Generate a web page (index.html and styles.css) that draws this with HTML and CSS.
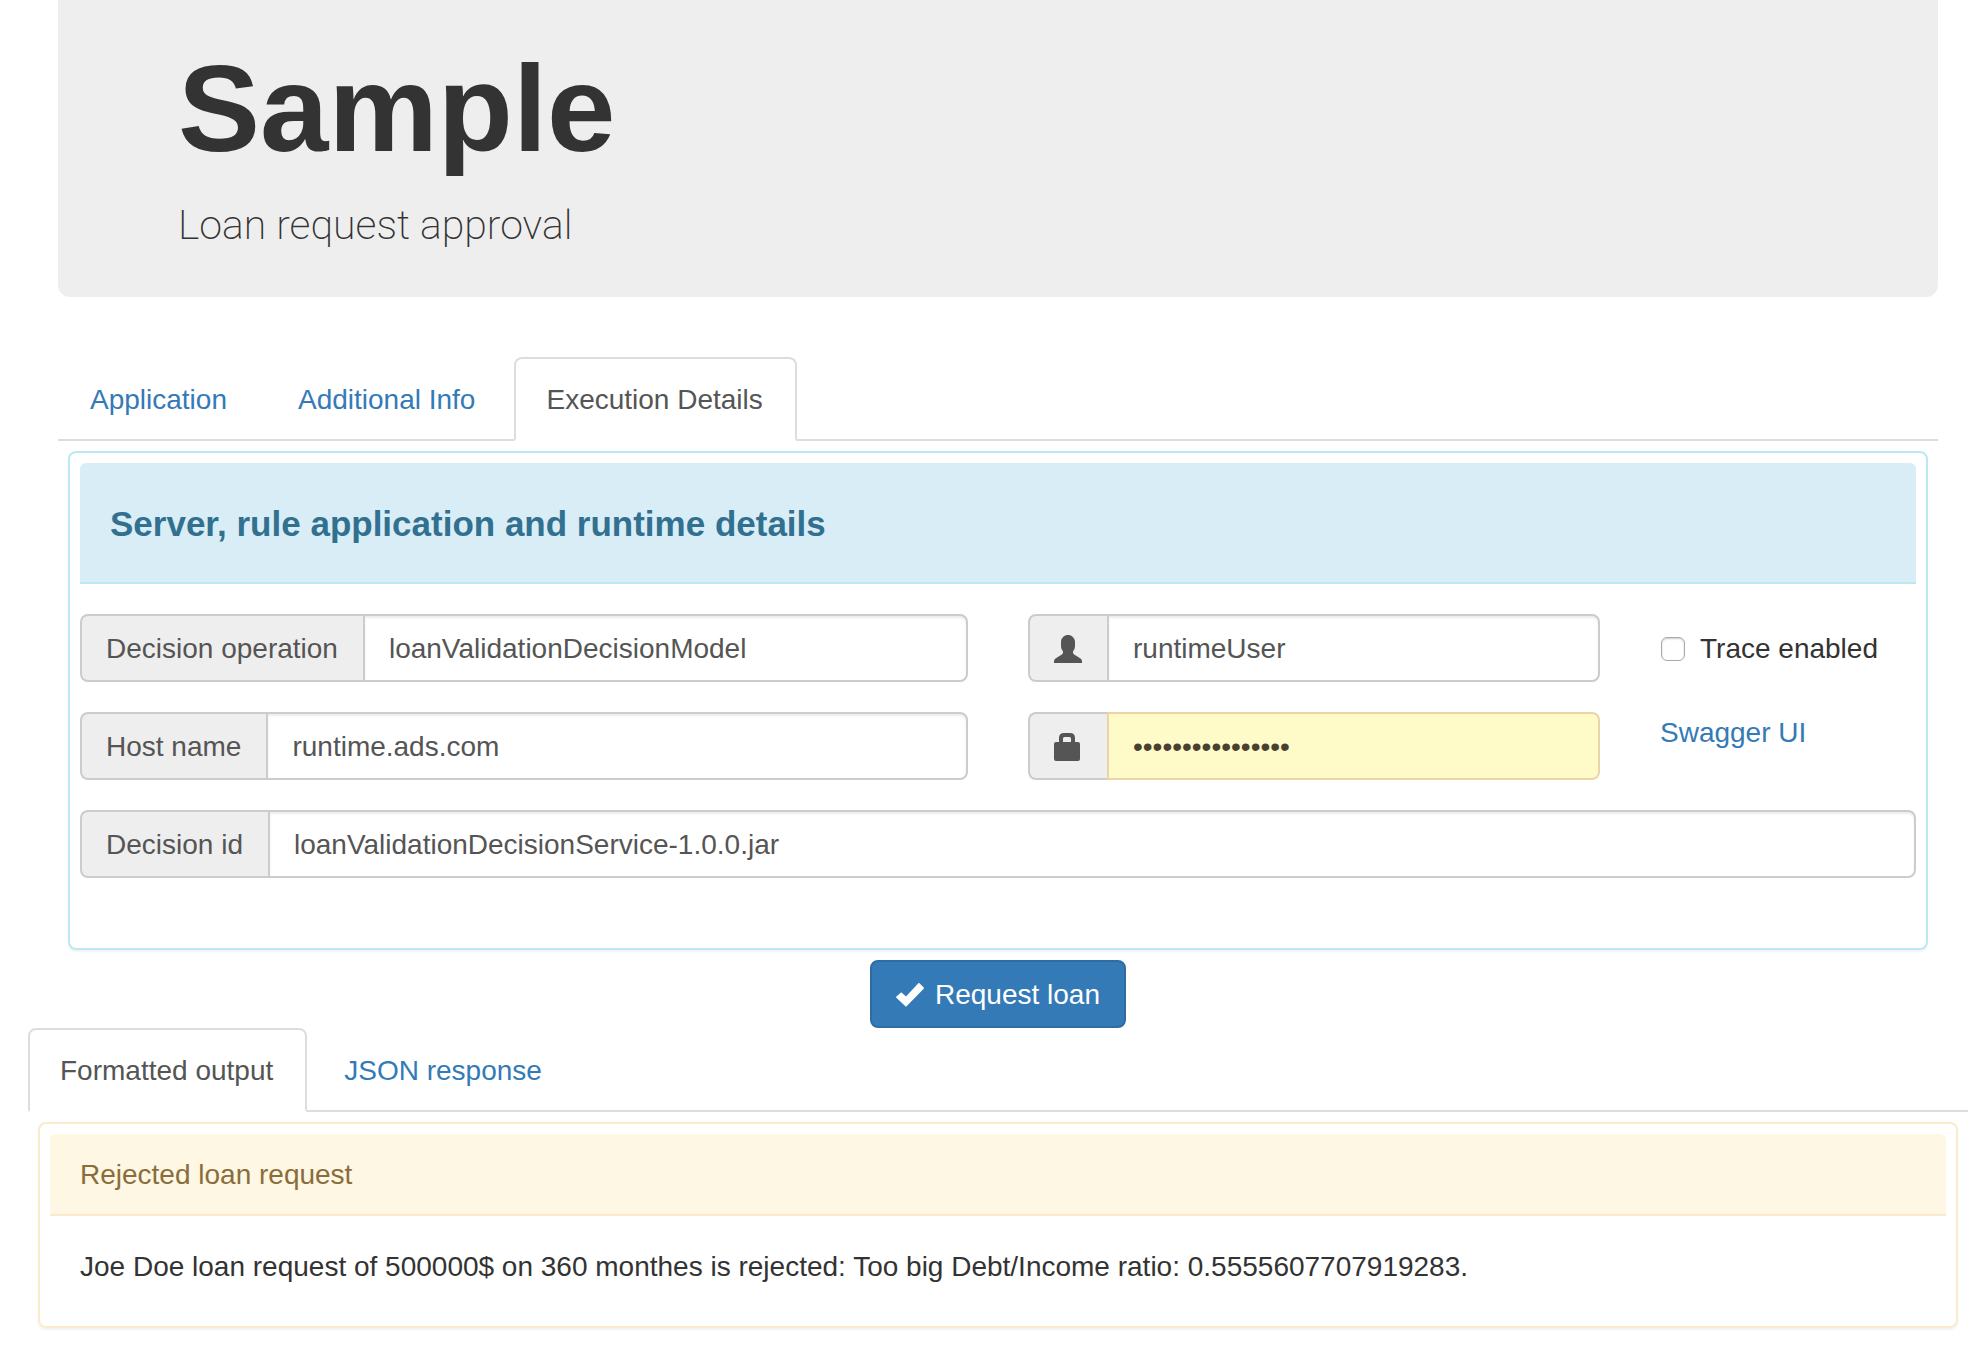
FILE: index.html
```html
<!DOCTYPE html>
<html lang="en">
<head>
<meta charset="utf-8">
<meta name="viewport" content="width=device-width, initial-scale=1">
<title>Loan request approval</title>
<link rel="stylesheet" href="styles.css">
</head>
<body>
<main class="page">
  <div class="request">
    <header class="jumbotron">
      <h1>Sample</h1>
      <p>Loan request approval</p>
    </header>

    <nav class="tabs">
      <a class="tab" href="#application">Application</a>
      <a class="tab" href="#additional">Additional Info</a>
      <a class="tab active" href="#execution">Execution Details</a>
    </nav>

    <section class="panel panel-info" id="execution">
      <div class="panel-heading">
        <h2>Server, rule application and runtime details</h2>
      </div>
      <form class="fields">
        <div class="column wide">
          <div class="input-group">
            <label class="addon" for="operation">Decision operation</label>
            <input class="control" id="operation" type="text" value="loanValidationDecisionModel">
          </div>
          <div class="input-group">
            <label class="addon" for="host">Host name</label>
            <input class="control" id="host" type="text" value="runtime.ads.com">
          </div>
        </div>
        <div class="column medium">
          <div class="input-group">
            <label class="addon" for="user" aria-label="User name">
              <svg class="icon" viewBox="0 0 28 28" aria-hidden="true"><path d="M14 0C17.500 0 21 2.700 21 7V11C21 13.500 20 15 19 16.500V17C19 18.700 19.700 19.400 21 20L26.500 23.500Q28 24.500 28 26V28H0V26Q0 24.500 1.500 23.500L7 20C8.300 19.400 9 18.700 9 17V16.500C8 15 7 13.500 7 11V7C7 2.700 10.500 0 14 0Z"/></svg>
            </label>
            <input class="control" id="user" type="text" value="runtimeUser">
          </div>
          <div class="input-group">
            <label class="addon" for="password" aria-label="Password">
              <svg class="icon" viewBox="0 0 28 28" aria-hidden="true"><path fill-rule="evenodd" d="M10 0H16Q21 0 21 5V9H24Q26 9 26 11V26Q26 28 24 28H2Q0 28 0 26V11Q0 9 2 9H5V5Q5 0 10 0ZM10.500 4Q9 4 9 5.500V9H17V5.500Q17 4 15.500 4Z"/></svg>
            </label>
            <input class="control autofilled" id="password" type="password" value="runtimePassword1">
          </div>
        </div>
        <div class="column narrow">
          <label class="checkbox"><input type="checkbox"><span>Trace enabled</span></label>
          <a class="link" href="#swagger">Swagger UI</a>
        </div>
        <div class="column full">
          <div class="input-group">
            <label class="addon" for="decision">Decision id</label>
            <input class="control" id="decision" type="text" value="loanValidationDecisionService-1.0.0.jar">
          </div>
        </div>
      </form>
    </section>

    <div class="actions">
      <button class="button" type="button">
        <svg class="icon" viewBox="0 0 28 28" aria-hidden="true"><path d="M23.500 2.300L27.700 6.500Q28.300 7.100 27.700 7.700L10.600 25.300Q10 25.900 9.400 25.300L.4 16.800Q-.2 16.200.4 15.600L4.700 11.800Q5.300 11.200 5.900 11.800L10 15.500L22.300 2.300Q22.900 1.700 23.500 2.300Z"/></svg>
        <span>Request loan</span>
      </button>
    </div>
  </div>

  <nav class="tabs">
    <a class="tab active" href="#output">Formatted output</a>
    <a class="tab" href="#json">JSON response</a>
  </nav>
  <section class="panel panel-warning" id="output">
    <div class="panel-heading">Rejected loan request</div>
    <p class="panel-body">Joe Doe loan request of 500000$ on 360 monthes is rejected: Too big Debt/Income ratio: 0.5555607707919283.</p>
  </section>
</main>
</body>
</html>
```
FILE: styles.css
```css
* {
  box-sizing: border-box;
}

body {
  margin: 0;
  background: #fff;
  color: #333;
  font: 28px/40px "Liberation Sans", Arial, sans-serif;
}

h1,
h2,
p {
  margin: 0;
}

a {
  color: #337ab7;
  text-decoration: none;
}

.page {
  padding: 0 10px 20px 28px;
}

.request {
  padding: 0 30px;
}

.jumbotron {
  margin-bottom: 60px;
  padding: 40px 120px 42px;
  border-radius: 0 0 12px 12px;
  background: #eee;
}

.jumbotron h1 {
  margin-bottom: 17px;
  font-size: 123px;
  line-height: 138px;
}

.jumbotron p {
  font-family: Roboto, "Liberation Sans", sans-serif;
  font-size: 41px;
  font-weight: 200;
  line-height: 60px;
}

.tabs {
  display: flex;
  gap: 5px;
  border-bottom: 2px solid #ddd;
}

.tab {
  margin-bottom: -2px;
  padding: 21px 32px 19px 30px;
  border: 2px solid transparent;
  border-radius: 8px 8px 0 0;
}

.tab.active {
  border-color: #ddd #ddd #fff;
  background: #fff;
  color: #555;
}

.panel {
  margin: 10px;
  padding: 10px;
  border: 2px solid;
  border-radius: 8px;
  box-shadow: 0 2px 2px rgba(0, 0, 0, 0.05);
}

.panel-heading {
  padding: 21px 30px 19px;
  border-bottom: 2px solid;
  border-radius: 6px 6px 0 0;
}

.panel-heading h2 {
  padding: 20px 0;
  font-size: 35px;
  line-height: 39px;
}

.panel-info,
.panel-info .panel-heading {
  border-color: #bce8f1;
}

.panel-info .panel-heading {
  background: #d9edf7;
  color: #31708f;
}

.panel-warning,
.panel-warning .panel-heading {
  border-color: #faebcc;
}

.panel-warning .panel-heading {
  background: #fdf7e3;
  color: #8a6d3b;
}

.panel-body {
  padding: 31px 30px 29px;
}

.fields {
  display: grid;
  grid-template-columns: repeat(12, minmax(0, 1fr));
  gap: 30px 60px;
  padding: 30px 0 60px;
}

.column {
  display: flex;
  flex-direction: column;
  gap: 30px;
}

.wide {
  grid-column: span 6;
}

.medium {
  grid-column: span 4;
}

.narrow {
  grid-column: span 2;
  gap: 44px;
  padding-top: 15px;
}

.full {
  grid-column: 1 / -1;
}

.input-group {
  display: flex;
}

.addon {
  display: flex;
  align-items: center;
  padding: 2px 25px 0 24px;
  border: 2px solid #ccc;
  border-right: 0;
  border-radius: 8px 0 0 8px;
  background: #eee;
  color: #555;
  white-space: nowrap;
}

.control {
  flex: 1;
  min-width: 0;
  height: 68px;
  padding: 14px 24px 12px;
  border: 2px solid #ccc;
  border-radius: 0 8px 8px 0;
  outline: 0;
  background: #fff;
  box-shadow: inset 0 2px 2px rgba(0, 0, 0, 0.075);
  color: #555;
  font: inherit;
}

.control.autofilled {
  border-color: #ebd5a5;
  background: #fffbc8;
  box-shadow: none;
  color: #4a4030;
}

.icon {
  width: 28px;
  height: 28px;
  fill: currentColor;
}

.checkbox {
  display: flex;
  align-items: center;
  gap: 15px;
  white-space: nowrap;
}

.checkbox input {
  width: 24px;
  height: 24px;
  margin: 0 0 0 1px;
  border: 1px solid #aaa;
  border-radius: 6px;
  appearance: none;
  background: #fff;
  box-shadow: inset 0 1px 2px rgba(0, 0, 0, 0.2);
}

.actions {
  display: flex;
  justify-content: center;
}

.button {
  display: flex;
  align-items: center;
  gap: 11px;
  padding: 13px 24px 11px;
  border: 2px solid #2e6da4;
  border-radius: 8px;
  background: #337ab7;
  color: #fff;
  font: inherit;
}
```
